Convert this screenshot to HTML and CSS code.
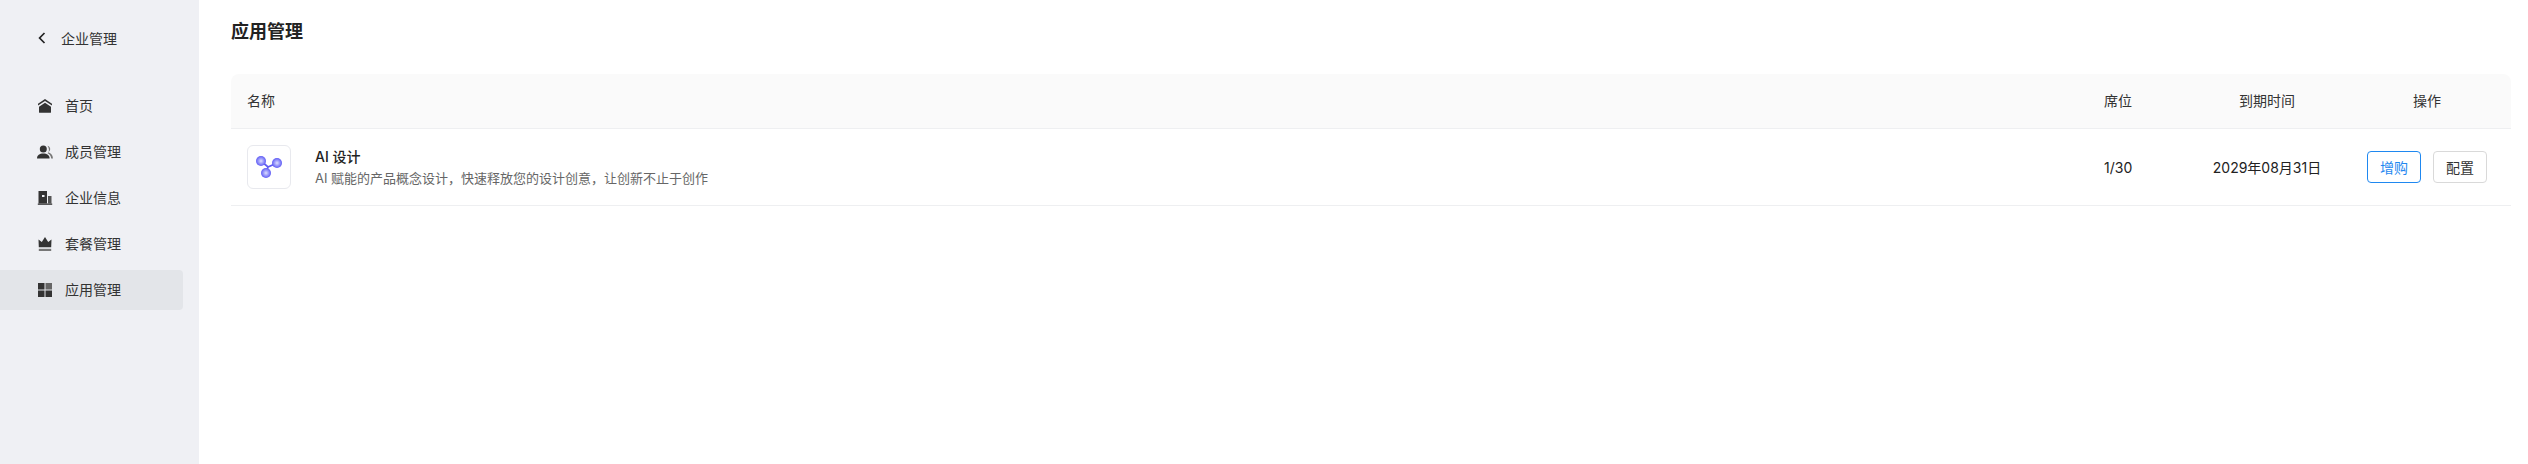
FILE: index.html
```html
<!DOCTYPE html>
<html lang="zh-CN">

<head>
    <meta charset="UTF-8">
    <meta name="viewport" content="width=device-width, initial-scale=1.0">
    <title>应用管理</title>
    <link rel="stylesheet" href="styles.css">
</head>

<body>
    <aside class="sidebar">
        <div class="back">
            <svg class="back-icon" viewBox="0 0 8 12" width="8" height="12"><path d="M6.500 1 1.600 6l4.900 5" fill="none" stroke="#222" stroke-width="1.700"/></svg>
            <span>企业管理</span>
        </div>
        <ul class="nav">
            <li class="nav-item">
                <svg class="nav-icon" viewBox="0 0 16 16"><path d="M8 1 15 5.800v1.700L8 3 1 7.500V5.800z" fill="#333"/><path d="M8 4.800 14 8.800v5.400c0 .4-.3.6-.6.6H2.600c-.3 0-.6-.2-.6-.6V8.800z" fill="#333"/></svg>
                <span>首页</span>
            </li>
            <li class="nav-item">
                <svg class="nav-icon" viewBox="0 0 16 16"><circle cx="6.300" cy="5" r="3.500" fill="#333"/><path d="M0 14.500c0-3.500 2.600-5 6.300-5s6.300 1.500 6.300 5z" fill="#333"/><path d="M10.500 1.700c1.700.4 2.700 1.700 2.700 3.300s-1 2.800-2.300 3.200c2.900.7 4.900 2.600 5.100 6.300h-1.800c-.2-2.600-1.600-4.300-3.600-5.200 1-1 1.400-2.400 1.300-4-.1-1.400-.7-2.600-1.400-3.600z" fill="#777"/></svg>
                <span>成员管理</span>
            </li>
            <li class="nav-item">
                <svg class="nav-icon" viewBox="0 0 16 16"><path d="M1.500 1h8.500v12.500H1.500z" fill="#333"/><path d="M5 5h2.500v2H5z" fill="#eff0f4"/><path d="M11 6h3.500v7.500H11z" fill="#555"/><path d="M.8 13.500h14.400v1.300H.8z" fill="#333"/></svg>
                <span>企业信息</span>
            </li>
            <li class="nav-item">
                <svg class="nav-icon" viewBox="0 0 16 16"><path d="M1.500 3.500 4.800 6 8 1l3.200 5 3.300-2.500-.3 7.800H1.800z" fill="#333"/><path d="M1.800 12.800h12.400V15H1.800z" fill="#777"/></svg>
                <span>套餐管理</span>
            </li>
            <li class="nav-item active">
                <svg class="nav-icon" viewBox="0 0 16 16"><path d="M1 1h6.500v6.500H1z" fill="#333"/><path d="M8.500 1H15v6.500H8.500z" fill="#666"/><path d="M1 8.500h6.500V15H1z" fill="#333"/><path d="M8.500 8.500H15V15H8.500z" fill="#333"/></svg>
                <span>应用管理</span>
            </li>
        </ul>
    </aside>

    <main class="content">
        <h1>应用管理</h1>
        <div class="table">
            <div class="row head">
                <div class="cell-name">名称</div>
                <div class="cell-seat">席位</div>
                <div class="cell-date">到期时间</div>
                <div class="cell-op">操作</div>
            </div>
            <div class="row body-row">
                <div class="cell-name app">
                    <div class="app-logo">
                        <svg viewBox="0 0 28 28" width="28" height="28">
                            <defs>
                                <radialGradient id="ball">
                                    <stop offset="0" stop-color="#dcdeff"/>
                                    <stop offset="1" stop-color="#5f5cf5"/>
                                </radialGradient>
                            </defs>
                            <path d="M6 8 13 14 22 10M13 14 11 20" fill="none" stroke="#5f5cf0" stroke-width="1.800"/>
                            <circle cx="6" cy="8" r="5" fill="url(#ball)"/>
                            <circle cx="22" cy="10" r="5" fill="url(#ball)"/>
                            <circle cx="11" cy="20" r="5" fill="url(#ball)"/>
                        </svg>
                    </div>
                    <div>
                        <div class="app-title">AI 设计</div>
                        <div class="app-desc">AI 赋能的产品概念设计，快速释放您的设计创意，让创新不止于创作</div>
                    </div>
                </div>
                <div class="cell-seat">1/30</div>
                <div class="cell-date">2029年08月31日</div>
                <div class="cell-op">
                    <button class="btn btn-blue">增购</button>
                    <button class="btn">配置</button>
                </div>
            </div>
        </div>
    </main>
</body>

</html>
```

FILE: styles.css
```css
* {
    margin: 0;
    padding: 0;
    list-style: none;
    box-sizing: border-box;
}

body {
    display: flex;
    height: 464px;
    overflow: hidden;
    background: #fff;
    color: #222;
    font-family: Inter, "Noto Sans CJK SC", sans-serif;
    font-size: 14px;
}

/* 左侧菜单 */
.sidebar {
    width: 199px;
    flex-shrink: 0;
    background: #eff0f4;
}

.back {
    display: flex;
    align-items: center;
    gap: 15px;
    height: 20px;
    margin: 28px 0 38px 38px;
    color: #333;
}

.nav {
    display: flex;
    flex-direction: column;
    gap: 6px;
    width: 183px;
}

.nav-item {
    display: flex;
    align-items: center;
    gap: 12px;
    height: 40px;
    padding-left: 37px;
    color: #333;
    border-radius: 0 4px 4px 0;
}

.nav-item span {
    margin-bottom: 2px;
}

.nav-icon {
    width: 16px;
    height: 16px;
}

.active {
    background: #e3e5e9;
}

/* 内容区 */
.content {
    flex: 1;
    padding: 20px 17px 0 32px;
}

h1 {
    height: 24px;
    font-size: 18px;
    font-weight: 600;
    line-height: 24px;
    color: #222;
    margin-bottom: 30px;
}

.row {
    display: flex;
    align-items: center;
    border-bottom: 1px solid #eeeff1;
}

.head {
    height: 55px;
    padding-bottom: 2px;
    background: #fafafa;
    border-radius: 8px 8px 0 0;
    color: #333;
}

.body-row {
    height: 77px;
}

.cell-name {
    flex: 1;
    padding-left: 16px;
}

.cell-seat {
    width: 87px;
}

.cell-date {
    width: 152px;
    text-align: center;
}

.cell-op {
    display: flex;
    justify-content: center;
    gap: 12px;
    width: 168px;
}

.app {
    display: flex;
    align-items: center;
    gap: 24px;
}

.app-logo {
    display: flex;
    align-items: center;
    justify-content: center;
    width: 44px;
    height: 44px;
    border: 1px solid #e8e9ee;
    border-radius: 6px;
}

.app-title {
    font-weight: 500;
    line-height: 20px;
    color: #222;
}

.app-desc {
    margin-top: 1px;
    font-size: 13px;
    line-height: 20px;
    color: #666;
}

.btn {
    width: 54px;
    height: 32px;
    background: #fff;
    border: 1px solid #d9d9d9;
    border-radius: 4px;
    font: inherit;
    color: #333;
}

.btn-blue {
    border-color: #1f88f0;
    color: #1f88f0;
}
```
